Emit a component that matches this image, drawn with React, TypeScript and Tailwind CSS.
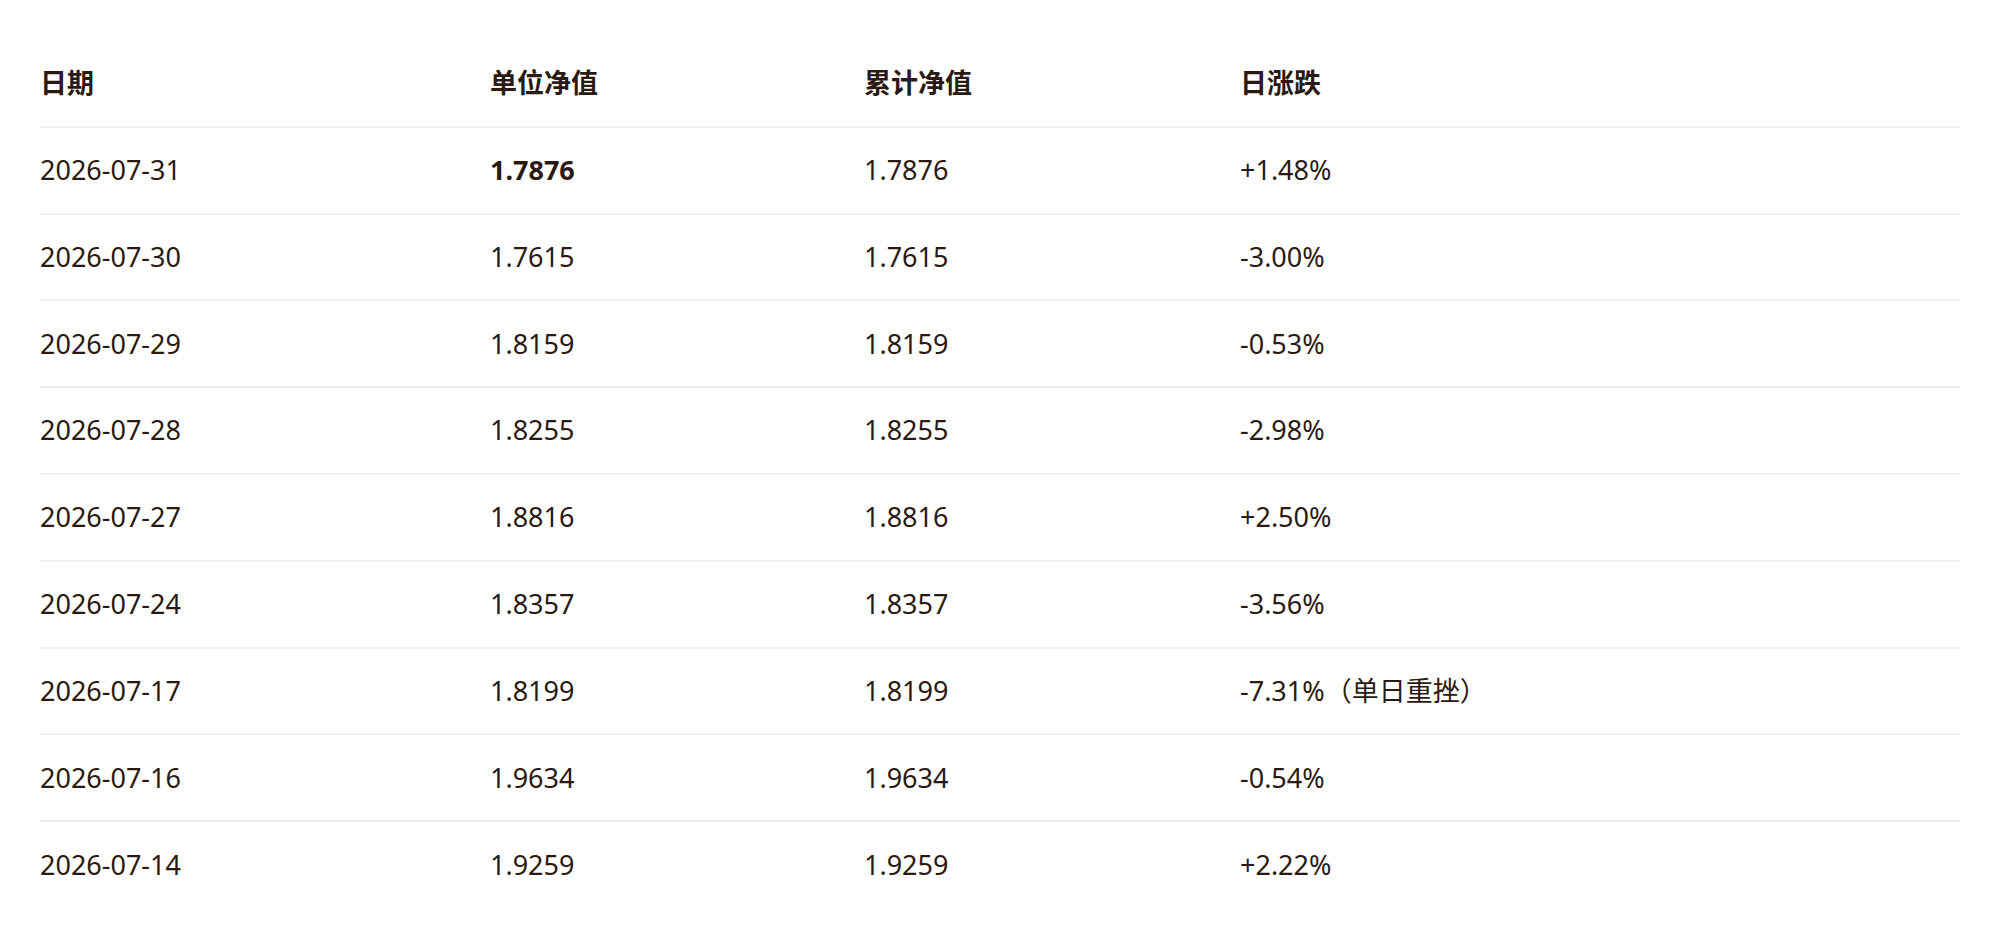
const ROWS = [
  { date: '2026-07-31', unit: '1.7876', total: '1.7876', change: '+1.48%', strong: true },
  { date: '2026-07-30', unit: '1.7615', total: '1.7615', change: '-3.00%' },
  { date: '2026-07-29', unit: '1.8159', total: '1.8159', change: '-0.53%' },
  { date: '2026-07-28', unit: '1.8255', total: '1.8255', change: '-2.98%' },
  { date: '2026-07-27', unit: '1.8816', total: '1.8816', change: '+2.50%' },
  { date: '2026-07-24', unit: '1.8357', total: '1.8357', change: '-3.56%' },
  { date: '2026-07-17', unit: '1.8199', total: '1.8199', change: '-7.31%（单日重挫）' },
  { date: '2026-07-16', unit: '1.9634', total: '1.9634', change: '-0.54%' },
  { date: '2026-07-14', unit: '1.9259', total: '1.9259', change: '+2.22%' },
]

const COLS = 'grid grid-cols-[450px_374px_376px_1fr] items-center'

export default function App() {
  return (
    <div className="min-h-screen bg-white pt-[41px] pl-[40px] pr-[40px] font-['Noto_Sans','Noto_Sans_CJK_SC',sans-serif] text-[27px] text-[#2a1a12]">
      <div className="w-[1920px]">
        {/* Header */}
        <div className={`${COLS} h-[86.8px] border-b-2 border-[#f0f0f0] font-bold`}>
          <div>日期</div>
          <div>单位净值</div>
          <div>累计净值</div>
          <div>日涨跌</div>
        </div>

        {/* Rows */}
        {ROWS.map((r, i) => (
          <div
            key={r.date}
            className={`${COLS} h-[86.8px] ${i < ROWS.length - 1 ? 'border-b-2 border-[#f0f0f0]' : ''}`}
          >
            <div>{r.date}</div>
            <div className={r.strong ? 'font-bold' : ''}>{r.unit}</div>
            <div>{r.total}</div>
            <div>{r.change}</div>
          </div>
        ))}
      </div>
    </div>
  )
}
